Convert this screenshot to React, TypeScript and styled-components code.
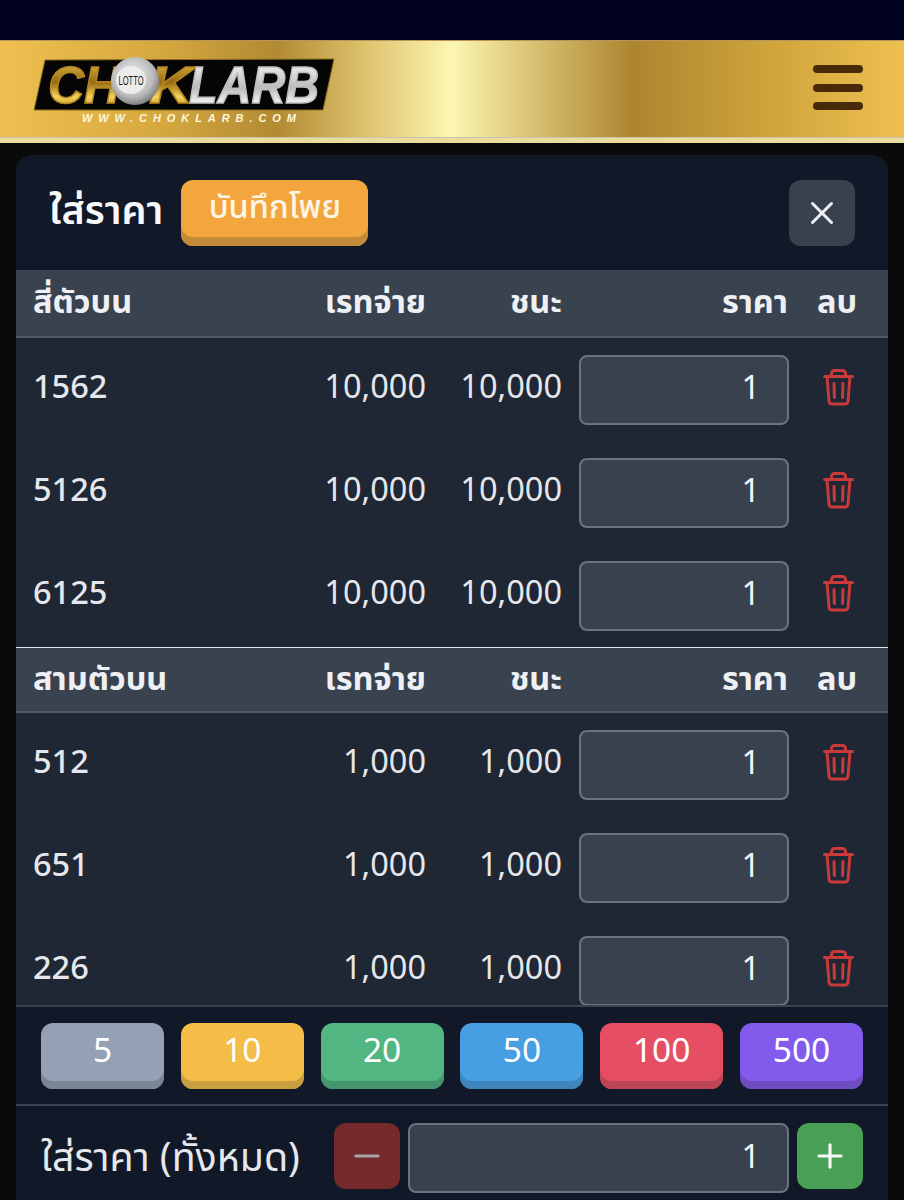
import React from 'react';
import styled, { createGlobalStyle } from 'styled-components';
import { X, Minus, Plus } from 'lucide-react';

const fontStack = `"Noto Sans", "Open Sans", "Noto Sans Thai", sans-serif`;

const Global = createGlobalStyle`
  html, body { margin: 0; padding: 0; background: #0a0a0a; }
  body { font-family: ${fontStack}; color: #f3f4f6; }
  * { box-sizing: border-box; }
`;

const Page = styled.div`
  width: 904px;
  height: 1200px;
  overflow: hidden;
  display: flex;
  flex-direction: column;
`;

const StatusBar = styled.div`
  height: 40px;
  flex: none;
  background: #00001f;
`;

const Header = styled.header`
  height: 103px;
  flex: none;
  display: flex;
  align-items: center;
  justify-content: space-between;
  padding: 0 41px 0 33px;
  border-top: 1px solid #b8965a;
  border-bottom: 5px solid #e9dc9c;
  box-shadow: inset 0 -1px 0 #c9c3ad;
  background: linear-gradient(90deg, #efc050 0%, #d5a83f 18%, #b18a33 30.5%, #dcc06a 40%, #fdf6b2 50%, #dcc778 58%, #ad8530 70%, #c89e38 82%, #efc050 100%);
`;

const Burger = styled.div`
  display: flex;
  flex-direction: column;
  gap: 10.5px;
  width: 50px;
  margin-top: -4px;
`;

const BurgerBar = styled.span`
  height: 8px;
  border-radius: 4px;
  background: #472a08;
`;

const LogoWrap = styled.div`
  display: flex;
  margin-top: 4px;
`;

const Panel = styled.main`
  flex: none;
  height: 1060px;
  margin: 12px 16px 0;
  border-radius: 16px 16px 0 0;
  background: #111827;
  display: flex;
  flex-direction: column;
  overflow: hidden;
`;

const PanelHead = styled.div`
  height: 115px;
  flex: none;
  display: flex;
  align-items: flex-start;
  padding: 25px 33px 0;
`;

const Title = styled.h1`
  margin: 3px 18px 0 0;
  font-size: 39.5px;
  line-height: 52px;
  font-weight: 600;
  color: #f7f8fa;
`;

const SaveButton = styled.button`
  width: 187px;
  height: 66px;
  padding: 0 0 14px;
  border: 0;
  border-radius: 12px;
  background: #f3a63e;
  box-shadow: inset 0 -9px 0 #c58a38;
  color: #fdf5e6;
  font: 500 32.5px/40px ${fontStack};
`;

const CloseButton = styled.button`
  width: 66px;
  height: 66px;
  margin-left: auto;
  padding: 0;
  border: 0;
  border-radius: 12px;
  background: #3a414e;
  color: #edf0f4;
  display: flex;
  align-items: center;
  justify-content: center;
`;

const Scroll = styled.div`
  height: 735px;
  flex: none;
  overflow: hidden;
  background: #1f2634;
`;

const columns = `
  display: grid;
  grid-template-columns: 1fr 136px 136px 226px 69px;
  align-items: center;
  padding: 0 31px 0 17px;
`;

const HeadRow = styled.div<{ $divider?: boolean }>`
  ${columns}
  height: ${(p) => (p.$divider ? '66px' : '68px')};
  background: #39424f;
  border-bottom: 2px solid #4f5968;
  border-top: ${(p) => (p.$divider ? '1px solid #e5e7eb' : '0')};
  font-size: 32.5px;
  font-weight: 700;
  color: #eef0f3;
`;

const Row = styled.div`
  ${columns}
  height: 103px;
  font-size: 32.5px;
  color: #e5e7eb;
`;

const Cell = styled.div<{ $right?: boolean }>`
  text-align: ${(p) => (p.$right ? 'right' : 'left')};
`;

const ValueCell = styled(Cell)`
  padding-bottom: 9px;
`;

const Name = styled.span`
  font-weight: 500;
`;

const PriceInput = styled.div`
  margin: 0 -1px 0 17px;
  height: 70px;
  border: 2px solid #6b7280;
  border-radius: 8px;
  background: #3a414e;
  display: flex;
  align-items: center;
  justify-content: flex-end;
  padding: 0 27px 6px;
  font-size: 32.5px;
  color: #f3f4f6;
`;

const DeleteCell = styled.div`
  display: flex;
  justify-content: flex-end;
  padding: 0 3px 4px 0;
  color: #c93a3a;
`;

const ChipBar = styled.div`
  flex: none;
  height: 101px;
  border-top: 2px solid #3a4250;
  border-bottom: 2px solid #3a4250;
  display: grid;
  grid-template-columns: repeat(6, 123px);
  justify-content: space-between;
  padding: 16px 25px 0;
`;

const Chip = styled.button<{ $bg: string; $edge: string }>`
  height: 66px;
  padding: 0 0 15px;
  border: 0;
  border-radius: 12px;
  background: ${(p) => p.$bg};
  box-shadow: inset 0 -8px 0 ${(p) => p.$edge};
  color: #fff;
  font: 400 33.5px/44px ${fontStack};
`;

const TotalBar = styled.div`
  flex: none;
  display: flex;
  align-items: flex-start;
  padding: 17px 25px 0;
`;

const TotalLabel = styled.div`
  width: 293px;
  font-size: 39.3px;
  line-height: 66px;
  white-space: nowrap;
  color: #e5e7eb;
`;

const StepButton = styled.button<{ $bg: string; $fg: string }>`
  width: 66px;
  height: 66px;
  flex: none;
  padding: 0;
  border: 0;
  border-radius: 12px;
  background: ${(p) => p.$bg};
  color: ${(p) => p.$fg};
  display: flex;
  align-items: center;
  justify-content: center;
`;

const TotalInput = styled(PriceInput)`
  flex: 1;
  margin: 0 8px;
`;

type Section = { title: string; rate: string; rows: string[] };

const sections: Section[] = [
  { title: 'สี่ตัวบน', rate: '10,000', rows: ['1562', '5126', '6125'] },
  { title: 'สามตัวบน', rate: '1,000', rows: ['512', '651', '226'] },
];

const chips = [
  { label: '5', bg: '#94a0b4', edge: '#7a8596' },
  { label: '10', bg: '#f3bd48', edge: '#c9a03f' },
  { label: '20', bg: '#52b683', edge: '#47956f' },
  { label: '50', bg: '#479ee0', edge: '#3f84bb' },
  { label: '100', bg: '#e64f63', edge: '#bc4556' },
  { label: '500', bg: '#835bec', edge: '#6d4dbf' },
];

const TrashIcon = () => (
  <svg width="31" height="37" viewBox="0 0 31 37" fill="none" stroke="currentColor" strokeWidth="3" strokeLinecap="round" strokeLinejoin="round">
    <path d="M1.5 7.5h28" />
    <path d="M8.5 7.5V4.5a3 3 0 0 1 3-3h8a3 3 0 0 1 3 3v3" />
    <path d="M4 7.5l2 24.5a3 3 0 0 0 3 3h13a3 3 0 0 0 3-3l2-24.5" />
    <path d="M11 14.5l.4 14" />
    <path d="M20 14.5l-.4 14" />
  </svg>
);

// logo is a drawing: slanted black plate, ball and gradient wordmark
const Logo = () => (
  <svg width="303" height="70" viewBox="0 0 303 70">
    <defs>
      <linearGradient id="goldText" x1="0" y1="0" x2="0" y2="1">
        <stop offset="0" stopColor="#f0cc58" />
        <stop offset="0.45" stopColor="#96690f" />
        <stop offset="0.7" stopColor="#f4d25c" />
        <stop offset="1" stopColor="#a8781a" />
      </linearGradient>
      <linearGradient id="silverText" x1="0" y1="0" x2="0" y2="1">
        <stop offset="0" stopColor="#ffffff" />
        <stop offset="0.55" stopColor="#bcbcbc" />
        <stop offset="0.8" stopColor="#f0f0f0" />
        <stop offset="1" stopColor="#8f8f8f" />
      </linearGradient>
      <radialGradient id="ball" cx="0.45" cy="0.4" r="0.65">
        <stop offset="0" stopColor="#f2f2f2" />
        <stop offset="0.65" stopColor="#bcbcbc" />
        <stop offset="1" stopColor="#6f6f6f" />
      </radialGradient>
    </defs>
    <polygon points="12,3 301,2 290,53 1,53" fill="#050505" stroke="#8c6d22" strokeWidth="1" />
    <text x="15" y="46" fontFamily="Liberation Sans" fontWeight="700" fontStyle="italic" fontSize="52" textLength="72" lengthAdjust="spacingAndGlyphs" fill="url(#goldText)" stroke="#b5851f" strokeWidth="1.5">CH</text>
    <text x="116" y="46" fontFamily="Liberation Sans" fontWeight="700" fontStyle="italic" fontSize="52" textLength="44" lengthAdjust="spacingAndGlyphs" fill="url(#goldText)" stroke="#b5851f" strokeWidth="1.5">K</text>
    <text x="156" y="46" fontFamily="Liberation Sans" fontWeight="700" fontStyle="italic" fontSize="52" textLength="130" lengthAdjust="spacingAndGlyphs" fill="url(#silverText)" stroke="#bdbdbd" strokeWidth="1.5">LARB</text>
    <circle cx="102" cy="24" r="24" fill="url(#ball)" />
    <ellipse cx="98" cy="23" rx="15" ry="14" fill="#ececec" />
    <text x="98" y="28" textAnchor="middle" fontFamily="Liberation Sans" fontWeight="400" fontSize="13" textLength="25" lengthAdjust="spacingAndGlyphs" fill="#1a1a1a">LOTTO</text>
    <text x="49" y="65" fontFamily="Liberation Sans" fontWeight="700" fontStyle="italic" fontSize="11" textLength="214" fill="#fdf7df">WWW.CHOKLARB.COM</text>
  </svg>
);

const App = () => (
  <Page>
    <Global />
    <StatusBar />
    <Header>
      <LogoWrap>
        <Logo />
      </LogoWrap>
      <Burger>
        <BurgerBar />
        <BurgerBar />
        <BurgerBar />
      </Burger>
    </Header>
    <Panel>
      <PanelHead>
        <Title>ใส่ราคา</Title>
        <SaveButton>บันทึกโพย</SaveButton>
        <CloseButton>
          <X size={38} strokeWidth={1.9} />
        </CloseButton>
      </PanelHead>
      <Scroll>
        {sections.map((section, i) => (
          <div key={section.title}>
            <HeadRow $divider={i > 0}>
              <Cell>{section.title}</Cell>
              <Cell $right>เรทจ่าย</Cell>
              <Cell $right>ชนะ</Cell>
              <Cell $right>ราคา</Cell>
              <Cell $right>ลบ</Cell>
            </HeadRow>
            {section.rows.map((num) => (
              <Row key={num}>
                <ValueCell><Name>{num}</Name></ValueCell>
                <ValueCell $right>{section.rate}</ValueCell>
                <ValueCell $right>{section.rate}</ValueCell>
                <PriceInput>1</PriceInput>
                <DeleteCell>
                  <TrashIcon />
                </DeleteCell>
              </Row>
            ))}
          </div>
        ))}
      </Scroll>
      <ChipBar>
        {chips.map((c) => (
          <Chip key={c.label} $bg={c.bg} $edge={c.edge}>{c.label}</Chip>
        ))}
      </ChipBar>
      <TotalBar>
        <TotalLabel>ใส่ราคา (ทั้งหมด)</TotalLabel>
        <StepButton $bg="#742a2a" $fg="#a6a6a6">
          <Minus size={38} strokeWidth={2} />
        </StepButton>
        <TotalInput>1</TotalInput>
        <StepButton $bg="#48a055" $fg="#f5f7f5">
          <Plus size={38} strokeWidth={2} />
        </StepButton>
      </TotalBar>
    </Panel>
  </Page>
);

export default App;
